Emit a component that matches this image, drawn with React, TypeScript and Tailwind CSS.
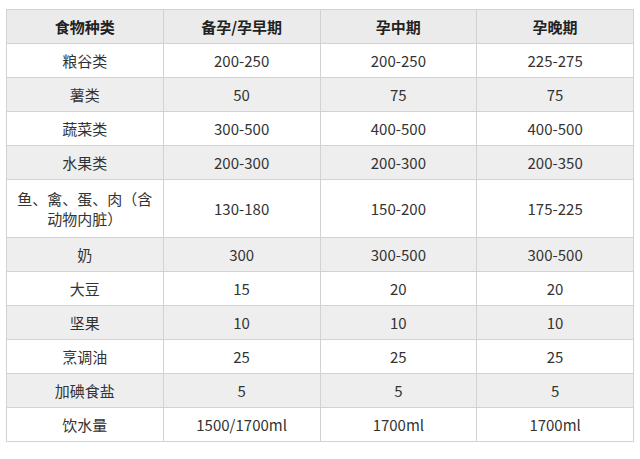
const header = ["食物种类", "备孕/孕早期", "孕中期", "孕晚期"];

const rows: { name: string; values: string[]; tall?: boolean }[] = [
  { name: "粮谷类", values: ["200-250", "200-250", "225-275"] },
  { name: "薯类", values: ["50", "75", "75"] },
  { name: "蔬菜类", values: ["300-500", "400-500", "400-500"] },
  { name: "水果类", values: ["200-300", "200-300", "200-350"] },
  { name: "鱼、禽、蛋、肉（含动物内脏）", values: ["130-180", "150-200", "175-225"], tall: true },
  { name: "奶", values: ["300", "300-500", "300-500"] },
  { name: "大豆", values: ["15", "20", "20"] },
  { name: "坚果", values: ["10", "10", "10"] },
  { name: "烹调油", values: ["25", "25", "25"] },
  { name: "加碘食盐", values: ["5", "5", "5"] },
  { name: "饮水量", values: ["1500/1700ml", "1700ml", "1700ml"] },
];

export default function App() {
  return (
    <div
      className="w-[640px] h-[459px] bg-white pt-[9px] pl-[6px]"
      style={{ fontFamily: '"Noto Sans CJK SC", "Noto Sans", sans-serif' }}
    >
      <table className="w-[628px] table-fixed border-collapse text-[15px] text-[#333]">
        <thead>
          <tr className="bg-[#ebebeb]">
            {header.map((h) => (
              <th
                key={h}
                className="h-[34px] border border-[#d2d2d2] px-2 text-center font-bold text-[#222] leading-5"
              >
                {h}
              </th>
            ))}
          </tr>
        </thead>
        <tbody>
          {rows.map((r, i) => (
            <tr key={r.name} className={i % 2 === 1 ? "bg-[#eeeeee]" : "bg-white"}>
              <td
                className={`${r.tall ? "h-[58px]" : "h-[34px]"} border border-[#d2d2d2] px-2 text-center leading-5`}
              >
                {r.name}
              </td>
              {r.values.map((v, j) => (
                <td key={j} className="border border-[#d2d2d2] px-2 text-center leading-5">
                  {v}
                </td>
              ))}
            </tr>
          ))}
        </tbody>
      </table>
    </div>
  );
}
